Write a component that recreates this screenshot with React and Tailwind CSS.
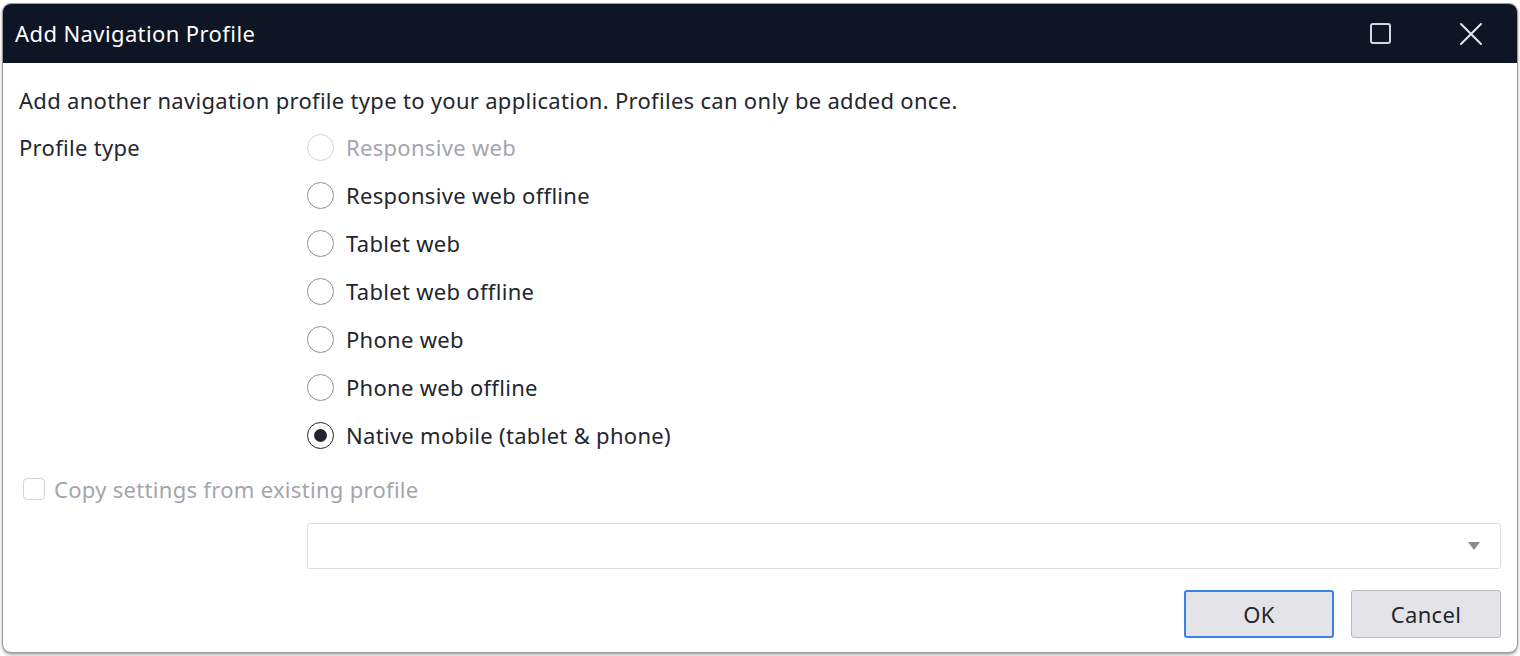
import React, { useState } from 'react';

const profileTypes = [
  { label: 'Responsive web', disabled: true },
  { label: 'Responsive web offline' },
  { label: 'Tablet web' },
  { label: 'Tablet web offline' },
  { label: 'Phone web' },
  { label: 'Phone web offline' },
  { label: 'Native mobile (tablet & phone)' },
];

const Radio = ({ checked, disabled }) => (
  <span
    className={`flex h-[27px] w-[27px] items-center justify-center rounded-full border-[1.5px] bg-white ${
      disabled ? 'border-[#d4d4d8]' : checked ? 'border-[#1f2430]' : 'border-[#8e8e96]'
    }`}
  >
    {checked && <span className="h-[13px] w-[13px] rounded-full bg-[#1f2430]" />}
  </span>
);

const App = () => {
  const [selected, setSelected] = useState('Native mobile (tablet & phone)');

  return (
    <div className="h-[656px] w-[1520px] overflow-hidden bg-white px-[2px] pt-[3px]" style={{ fontFamily: '"Noto Sans", "Open Sans", sans-serif' }}>
      <div className="flex h-[650px] flex-col overflow-hidden rounded-[9px] border border-[#9b9b9b] bg-white shadow-[0_2px_3px_rgba(0,0,0,0.35)]">
        {/* Title bar */}
        <div className="flex h-[59px] shrink-0 items-center bg-[#0e1524] pl-[12px] text-white">
          <span className="text-[22px] tracking-[0.4px]">Add Navigation Profile</span>
          <div className="ml-auto flex items-center">
            <button className="flex h-[59px] w-[90px] items-center justify-center pr-[4px]">
              <span className="h-[21px] w-[21px] rounded-[3px] border-2 border-[#d6d6da]" />
            </button>
            <button className="flex h-[59px] w-[90px] items-center justify-center pr-[2px]">
              <svg width="24" height="24" viewBox="0 0 24 24" fill="none" stroke="#e8e8ec" strokeWidth="2" strokeLinecap="round">
                <path d="M2 2 L22 22 M22 2 L2 22" />
              </svg>
            </button>
          </div>
        </div>

        {/* Body */}
        <div className="flex flex-1 flex-col px-[16px] text-[22px] tracking-[0.3px] text-[#23262e]">
          <p className="mt-[23px] leading-[28px]">
            Add another navigation profile type to your application. Profiles can only be added once.
          </p>

          <div className="mt-[19px] flex">
            <div className="w-[288px] shrink-0 leading-[28px]">Profile type</div>
            <div className="flex flex-col gap-[20px]">
              {profileTypes.map((p) => (
                <label
                  key={p.label}
                  className={`flex h-[28px] items-center gap-[12px] ${p.disabled ? 'text-[#a4a5ad]' : ''}`}
                  onClick={() => !p.disabled && setSelected(p.label)}
                >
                  <Radio checked={selected === p.label} disabled={p.disabled} />
                  <span>{p.label}</span>
                </label>
              ))}
            </div>
          </div>

          <label className="mt-[26px] flex h-[28px] items-center gap-[9px] pl-[4px] text-[#a4a5ad]">
            <span className="h-[22px] w-[22px] rounded-[4px] border-[1.5px] border-[#d4d4d8] bg-white" />
            <span>Copy settings from existing profile</span>
          </label>

          <div className="mt-[20px] flex">
            <div className="w-[288px] shrink-0" />
            <div className="flex h-[46px] flex-1 items-center justify-end rounded-[3px] border border-[#dcdce0] bg-white pr-[20px]">
              <svg width="12" height="8" viewBox="0 0 12 8">
                <path d="M0 0 H12 L6 8 Z" fill="#8b8b92" />
              </svg>
            </div>
          </div>

          <div className="mt-[21px] flex justify-end gap-[17px]">
            <button className="h-[48px] w-[150px] rounded-[3px] border-2 border-[#3b82e6] bg-[#e4e4e8] text-[22px] text-[#23262e]">
              OK
            </button>
            <button className="h-[48px] w-[150px] rounded-[3px] border border-[#b8b8be] bg-[#e4e4e8] text-[22px] text-[#23262e]">
              Cancel
            </button>
          </div>
        </div>
      </div>
    </div>
  );
};

export default App;
